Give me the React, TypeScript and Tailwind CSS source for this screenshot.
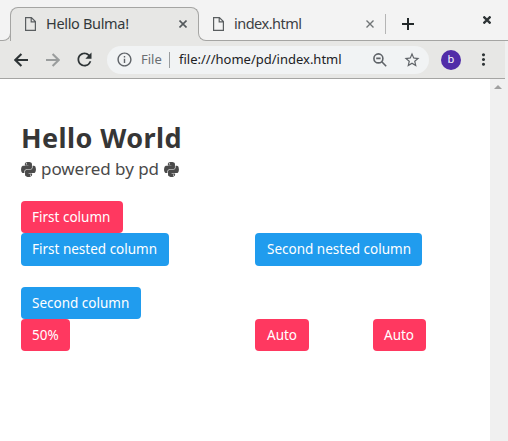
import React from "react";
import { FaPython } from "react-icons/fa";
import { MdRefresh, MdMoreVert, MdStarBorder, MdOutlineInfo } from "react-icons/md";

function FileIcon() {
  return (
    <svg className="h-[14px] w-[11px] shrink-0" viewBox="0 0 11 14" fill="none" stroke="#5a5e60" strokeWidth="1.2">
      <path d="M.6.6h5.8l4 4v8.8H.6zM6.2.8v4h4" />
    </svg>
  );
}

function ArrowIcon({ className }: { className: string }) {
  return (
    <svg className={className} viewBox="0 0 14 14" fill="none" stroke="currentColor" strokeWidth="2.1">
      <path d="M14 7H1.8M7.4.9L1.3 7l6.1 6.1" />
    </svg>
  );
}

function ZoomOutIcon() {
  return (
    <svg className="h-[14px] w-[14px] shrink-0" viewBox="0 0 14 14" fill="none" stroke="#5f6368" strokeWidth="1.6">
      <circle cx="5.4" cy="5.4" r="4.5" />
      <path d="M8.8 8.8l4.4 4.4M3.2 5.4h4.4" />
    </svg>
  );
}

function Cross({ className, width = 1.6 }: { className: string; width?: number }) {
  return (
    <svg className={className} viewBox="0 0 8 8" fill="none" stroke="currentColor" strokeWidth={width}>
      <path d="M.5.5l7 7M7.5.5l-7 7" />
    </svg>
  );
}

function TabStrip() {
  return (
    <div className="flex h-[41px] items-end bg-[#f3f3f3]">
      <div className="-mr-px h-[10px] w-[11px] shrink-0 bg-[#e7e7e5]">
        <div className="h-full rounded-br-[8px] border-r border-b border-[#a5a5a3] bg-[#f3f3f3]" />
      </div>
      <div className="flex h-[34px] w-[189px] shrink-0 items-center rounded-t-[8px] border-t border-r border-l border-[#a5a5a3] bg-[#e7e7e5] pb-px pl-[14px]">
        <FileIcon />
        <span className="ml-[10px] w-[133px] text-[14.5px] tracking-[-0.33px] text-[#33393b]">Hello Bulma!</span>
        <Cross className="h-2 w-2 text-[#54595c]" />
      </div>
      <div className="-ml-px h-[10px] w-[9px] shrink-0 bg-[#e7e7e5]">
        <div className="h-full rounded-bl-[8px] border-b border-l border-[#a5a5a3] bg-[#f3f3f3]" />
      </div>
      <div className="flex h-[41px] flex-1 items-center border-b border-[#a5a5a3] pt-[8px]">
        <span className="ml-[6px] flex">
          <FileIcon />
        </span>
        <span className="ml-[10px] w-[132px] text-[14.5px] tracking-[-0.5px] text-[#3c4043]">index.html</span>
        <Cross className="h-2 w-2 text-[#707476]" width={1.4} />
        <div className="ml-[11px] h-5 w-px bg-[#b5b5b5]" />
        <svg className="ml-[16px] h-3 w-3" viewBox="0 0 12 12" stroke="#222829" strokeWidth="2">
          <path d="M6 0v12M0 6h12" />
        </svg>
        <Cross className="mb-[8px] ml-[69px] h-2 w-2 text-[#2e3436]" width={2.3} />
      </div>
    </div>
  );
}

function Toolbar() {
  return (
    <div className="flex h-[38px] bg-[#f0f0f0]">
      <div className="flex w-[505px] items-center border-b border-[#a5a5a3] bg-[#e7e7e5] pl-[14px]">
        <ArrowIcon className="h-[14px] w-[14px] text-[#2e3436]" />
        <ArrowIcon className="ml-[18px] h-[14px] w-[14px] rotate-180 text-[#9a9d9d]" />
        <MdRefresh className="ml-[14px] h-[21px] w-[21px] text-[#2e3436]" />
        <div className="ml-[12px] flex h-7 w-[322px] items-center rounded-full bg-[#f1f3f4] pl-[9px]">
          <MdOutlineInfo className="h-[17px] w-[17px] text-[#5f6368]" />
          <span className="ml-[8px] w-[28px] text-[13px] text-[#6a6e72]">File</span>
          <div className="h-4 w-px bg-[#9a9d9f]" />
          <span className="ml-[9px] w-[194px] text-[13px] whitespace-nowrap text-[#202124]">
            file:///home/pd/index.html
          </span>
          <ZoomOutIcon />
          <MdStarBorder className="ml-[16px] h-[18px] w-[18px] text-[#5f6368]" />
        </div>
        <div className="ml-[12px] flex h-5 w-5 items-center justify-center rounded-full bg-[#512da8] text-[11px] text-white">
          b
        </div>
        <MdMoreVert className="ml-[13px] h-[19px] w-[19px] text-[#2e3436]" />
      </div>
    </div>
  );
}

function Tag({ color, size, children }: { color: "red" | "blue"; size: string; children: string }) {
  return (
    <span
      className={`flex items-center rounded-[4px] text-[13.5px] leading-5 whitespace-nowrap text-white ${size} ${
        color === "red" ? "bg-[#ff3860]" : "bg-[#209cee]"
      }`}
    >
      {children}
    </span>
  );
}

function Page() {
  return (
    <main className="flex-1 bg-white pt-[41px] pl-[21px]">
      <h1 className="h-[36px] text-[27px] leading-[36px] font-bold tracking-[0.42px] text-[#363636]">Hello World</h1>
      <p className="flex h-[26px] items-center text-[17px] leading-[26px] tracking-[-0.05px] text-[#4a4a4a]">
        <FaPython className="h-[17px] w-[15px]" />
        <span className="ml-[5px] w-[122px] whitespace-nowrap">powered by pd</span>
        <FaPython className="h-[17px] w-[17px]" />
      </p>
      <section className="mt-[19px]">
        <Tag color="red" size="w-[102px] h-8 pl-[11px]">First column</Tag>
        <div className="flex">
          <div className="w-[234px]">
            <Tag color="blue" size="w-[148px] h-[33px] pb-px pl-[11px]">First nested column</Tag>
          </div>
          <Tag color="blue" size="w-[167px] h-[33px] pb-px pl-[12px]">Second nested column</Tag>
        </div>
      </section>
      <section className="mt-[21px]">
        <Tag color="blue" size="w-[120px] h-8 pl-[11px]">Second column</Tag>
        <div className="flex">
          <div className="w-[234px]">
            <Tag color="red" size="w-[49px] h-8 pl-[11px]">50%</Tag>
          </div>
          <div className="w-[118px]">
            <Tag color="red" size="w-[54px] h-8 pl-[12px]">Auto</Tag>
          </div>
          <Tag color="red" size="w-[53px] h-8 pl-[11px]">Auto</Tag>
        </div>
      </section>
    </main>
  );
}

export default function App() {
  return (
    <div className="flex h-[441px] w-[508px] flex-col overflow-hidden bg-white font-['Noto_Sans',sans-serif]">
      <TabStrip />
      <Toolbar />
      <div className="flex flex-1">
        <Page />
        <div className="flex w-[18px] bg-[#f0f0f0] pt-[6px] pl-[4px]">
          <div className="h-0 w-0 border-x-4 border-b-4 border-x-transparent border-b-[#a0a0a0]" />
        </div>
      </div>
    </div>
  );
}
